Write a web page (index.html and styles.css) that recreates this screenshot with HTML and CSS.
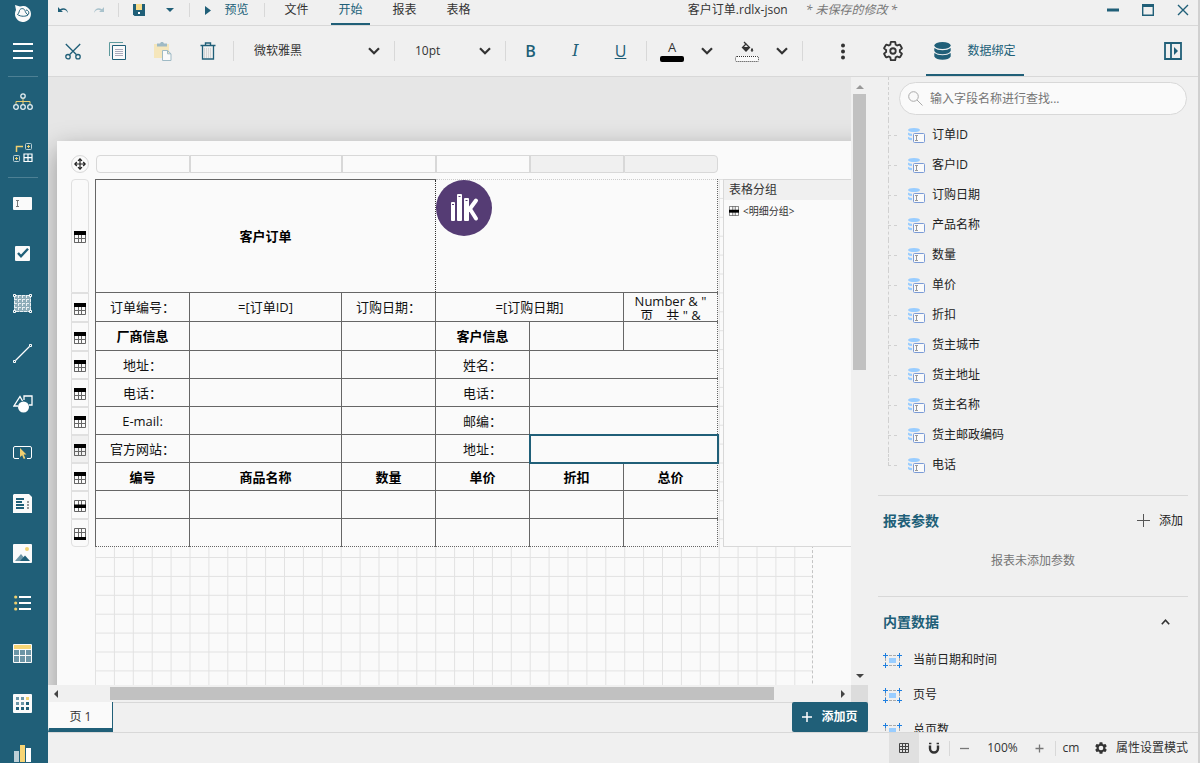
FILE: index.html
```html
<!DOCTYPE html>
<html lang="zh-CN">
<head>
<meta charset="utf-8">
<title>客户订单.rdlx-json</title>
<link rel="stylesheet" href="styles.css">
</head>
<body>
<svg class="sprite" aria-hidden="true">
  <symbol id="chevron" viewBox="0 0 12 8"><path d="M1 1.2l5 5 5-5" fill="none" stroke="currentColor" stroke-width="2.2"/></symbol>
  <symbol id="row-head" viewBox="0 0 12 12"><path d="M.5.5h11v11H.5zM.5 4v7.500M4.500 3v8.500M7.500 3v8.500M.5 7.500h11" fill="none" stroke="#666"/><path d="M0 0h12v4H0z"/></symbol>
  <symbol id="row-detail" viewBox="0 0 12 12"><path d="M.5.5h11v11H.5zM4.500 0v12M7.500 0v12" fill="none" stroke="#666"/><path d="M0 4.500h12v3.500H0z"/></symbol>
  <symbol id="row-foot" viewBox="0 0 12 12"><path d="M.5.5h11v11H.5zM4.500 0v9M7.500 0v9M.5 4.500h11" fill="none" stroke="#666"/><path d="M0 9h12v3H0z"/></symbol>
  <symbol id="field" viewBox="0 0 17 15"><ellipse cx="6" cy="2" rx="6" ry="2" fill="#99cdff"/><path d="M0 4.500q2 1.200 4 1.200V8q-3 0-4-1.300zM0 8.700q2 1.200 4 1.200v2.400q-3 0-4-1.400z" fill="#99cdff"/><rect x="5.500" y="5.500" width="11" height="9" rx="1" fill="#fafafa" stroke="#7a9bd6"/><path d="M7 7.500h3M7 12.500h3M8.500 7.500v5" stroke="#999" fill="none"/></symbol>
  <symbol id="builtin" viewBox="0 0 19 15"><path d="M6 2.500h7M6 12.500h7M2.500 5v5M16.500 5v5" stroke="#aaa" stroke-dasharray="3 1" fill="none"/><path d="M6 5h7v5H6z" fill="#99cdff"/><path d="M0 2.500h5M2.500 0v5M14 2.500h5M16.500 0v5M0 12.500h5M2.500 10v5M14 12.500h5M16.500 10v5" stroke="#1e7fe0" fill="none"/></symbol>
  <symbol id="gear" viewBox="0 0 24 24"><path d="M19.430 12.980c.04-.32.07-.64.07-.98s-.03-.66-.07-.98l2.110-1.650a.5.5 0 0 0 .12-.64l-2-3.460a.5.5 0 0 0-.61-.22l-2.490 1a7.300 7.300 0 0 0-1.690-.98l-.38-2.650A.49.49 0 0 0 14 2h-4a.49.49 0 0 0-.49.420l-.38 2.650c-.61.250-1.170.590-1.690.980l-2.490-1a.5.5 0 0 0-.61.220l-2 3.460a.5.5 0 0 0 .12.640l2.110 1.650c-.04.320-.07.650-.07.980s.03.660.07.980l-2.110 1.650a.5.5 0 0 0-.12.640l2 3.460c.12.220.39.300.61.220l2.490-1c.52.400 1.080.730 1.690.980l.38 2.650c.03.240.24.420.49.420h4c.25 0 .46-.18.49-.42l.38-2.650c.61-.25 1.170-.59 1.690-.98l2.490 1c.23.090.49 0 .61-.22l2-3.460a.5.5 0 0 0-.12-.64z"/></symbol>
</svg>

<div class="app">
  <nav class="sidebar" aria-label="工具箱">
    <div class="brand">
      <svg width="18" height="18" viewBox="0 0 18 18"><path d="M1 1l5 1.500A8 8 0 1 1 2 6z" fill="#fafafa"/><path d="M3.500 10.500c1-1 1.500-2 2-4 .8-2.500 4.500-2.500 5.500 0 .4 1.500 1 3 3 4.500-2 1.500-7 2-10.500-.5zM12 6c2 0 3.500 2 2.500 4.500" fill="none" stroke="#205f78"/></svg>
    </div>
    <button class="tool" aria-label="菜单"><svg width="20" height="16" viewBox="0 0 20 16"><path d="M0 1h20M0 8h20M0 15h20" stroke="#fff" stroke-width="2"/></svg></button>
    <hr class="tool-rule">
    <button class="tool" aria-label="结构"><svg width="20" height="18" viewBox="0 0 20 18" fill="none"><path d="M10 5v6M3 11.500V8.500h14v3" stroke="#e8cd72"/><g stroke="#e4eef1" stroke-width="1.300"><circle cx="10" cy="3" r="2.200"/><circle cx="3" cy="14" r="2.300"/><circle cx="10" cy="14" r="2.300"/><circle cx="17" cy="14" r="2.300"/></g></svg></button>
    <button class="tool" aria-label="分组"><svg width="20" height="20" viewBox="0 0 20 20" fill="none"><path d="M3.500 10V4.500H10" stroke="#f0d070" stroke-width="1.500"/><g stroke="#b9d0d8"><rect x="12.500" y="1.500" width="6" height="6" rx="1"/><rect x=".5" y="13.500" width="6" height="6" rx="1"/></g><path d="M14 4.500h3M15.500 3v3M2 16.500h3M3.500 15v3" stroke="#f0d070"/><path d="M11 12h8v7.500h-8zM15 12v7.500M11 15.700h8" stroke="#fff" stroke-width="1.200"/></svg></button>
    <hr class="tool-rule">
    <button class="tool" aria-label="文本框"><svg width="19" height="13" viewBox="0 0 19 13"><rect width="19" height="13" rx="1" fill="#fafafa"/><path d="M3 3.500h3M3 9.500h3M4.500 3.500v6" stroke="#777"/></svg></button>
    <button class="tool" aria-label="复选框"><svg width="15" height="15" viewBox="0 0 15 15"><rect width="15" height="15" rx="1" fill="#fafafa"/><path d="M3 7l3 3.200 7-7.500" fill="none" stroke="#205f78" stroke-width="2.400"/></svg></button>
    <button class="tool" aria-label="容器"><svg width="19" height="19" viewBox="0 0 19 19" fill="none"><path d="M1.500 1.500h16v16h-16z" fill="#8fadb9"/><path d="M1.500 1.500h16v16h-16zM5.500 1v17M9.500 1v17M13.500 1v17M1 5.500h17M1 9.500h17M1 13.500h17" stroke="#e9f0f3" stroke-dasharray="3 1"/><g fill="#205f78" stroke="#fff"><path d="M.5.5h2v2h-2zM16.500.5h2v2h-2zM.5 16.500h2v2h-2zM16.500 16.500h2v2h-2z"/></g></svg></button>
    <button class="tool" aria-label="线"><svg width="19" height="19" viewBox="0 0 19 19" fill="none" stroke="#fff"><path d="M2.500 16.500l14-14" stroke-width="1.300"/><path d="M.5 16.500h2v2h-2zM16.500.5h2v2h-2z" fill="#205f78"/></svg></button>
    <button class="tool" aria-label="形状"><svg width="20" height="20" viewBox="0 0 20 20" fill="none" stroke="#fff" stroke-width="1.300"><path d="M5 13H1L7 3.500 9.500 8M11 7V3h8v9h-3"/><circle cx="10.500" cy="14" r="5.500" fill="#fff" stroke="none"/></svg></button>
    <button class="tool" aria-label="目标"><svg width="19" height="14" viewBox="0 0 19 14" fill="none"><path d="M6 12.500H2a1.500 1.500 0 0 1-1.500-1.500V2A1.500 1.500 0 0 1 2 .5h15A1.500 1.500 0 0 1 18.500 2v9a1.500 1.500 0 0 1-1.500 1.500h-3" stroke="#fff"/><path d="M7 2l6.500 6.500h-2.800l1.600 3.700-1.500.7-1.600-3.700L7 11z" fill="#f0d070"/></svg></button>
    <button class="tool" aria-label="目录"><svg width="19" height="19" viewBox="0 0 19 19"><path d="M1 0h15l3 3v16H0V1z" fill="#fafafa"/><path d="M3 5h8M3 8h6M3 11h8M3 14h8" stroke="#205f78" stroke-width="2"/><path d="M14 8h2M14 11h2M14 14h2" stroke="#999" stroke-width="2"/></svg></button>
    <button class="tool" aria-label="图像"><svg width="19" height="19" viewBox="0 0 19 19"><rect width="19" height="19" rx="1" fill="#fafafa"/><circle cx="14" cy="5" r="2" fill="#f0d070"/><path d="M2 17l6-7 6 7z" fill="#6c95a6"/><path d="M7 17l5-5.500 5 5.500z" fill="#205f78"/></svg></button>
    <button class="tool" aria-label="列表"><svg width="18" height="16" viewBox="0 0 18 16"><path d="M5 2h12M5 8h12M5 14h12" stroke="#fff" stroke-width="2"/><g fill="#f0d070"><circle cx="1.700" cy="2" r="1.600"/><circle cx="1.700" cy="8" r="1.600"/><circle cx="1.700" cy="14" r="1.600"/></g></svg></button>
    <button class="tool" aria-label="表格"><svg width="19" height="19" viewBox="0 0 19 19"><rect width="19" height="19" rx="1" fill="#fafafa"/><path d="M1 1h17v4H1z" fill="#f7d575"/><path d="M1 6h5v5H1zM7 6h5v5H7zM13 6h5v5h-5zM1 12h5v6H1zM7 12h5v6H7zM13 12h5v6h-5z" fill="#6c95a6"/></svg></button>
    <button class="tool" aria-label="矩表"><svg width="19" height="19" viewBox="0 0 19 19"><rect width="19" height="19" rx="1" fill="#fafafa"/><path d="M3 3h3v3H3zM8 3h3v3H8zM3 8h3v3H3zM8 8h3v3H8z" fill="#6c95a6"/><path d="M13 3h3v3h-3z" fill="#f0d070"/><path d="M13 8h3v3h-3zM3 13h3v3H3zM8 13h3v3H8zM13 13h3v3h-3z" fill="#205f78"/></svg></button>
    <button class="tool" aria-label="图表"><svg width="17" height="17" viewBox="0 0 17 17"><path d="M0 6h5v11H0z" fill="#bccfd7"/><path d="M6 0h5v17H6z" fill="#f7d575"/><path d="M12 3h5v14h-5z" fill="#fff"/></svg></button>
  </nav>

  <div class="main">
    <header class="menubar">
      <button class="mini" aria-label="撤销"><svg width="12" height="8" viewBox="0 0 12 8"><path d="M1 1v5h5L4.200 4.400C7 2.800 9.500 4 11 7 10.500 3 7 1 3 3.200z" fill="#205f78"/></svg></button>
      <button class="mini" aria-label="重做" disabled><svg width="12" height="8" viewBox="0 0 12 8"><path d="M11 1v5H6l1.800-1.600C5 2.800 2.500 4 1 7 1.500 3 5 1 9 3.200z" fill="#a9c2cc"/></svg></button>
      <span class="vr"></span>
      <button class="mini save" aria-label="保存"><svg width="12" height="12" viewBox="0 0 12 12"><path d="M0 0h12v12H1.500L0 10.500z" fill="#205f78"/><path d="M3 0h6v6H3z" fill="#f7dc8a"/><path d="M5 8h2v2H5z" fill="#fff"/></svg></button>
      <button class="mini caret" aria-label="更多保存选项"><svg width="8" height="4" viewBox="0 0 8 4"><path d="M0 0h8L4 4z" fill="#205f78"/></svg></button>
      <span class="vr"></span>
      <button class="preview"><svg width="6" height="9" viewBox="0 0 6 9"><path d="M0 0l6 4.500L0 9z" fill="#205f78"/></svg>预览</button>
      <span class="vr"></span>
      <div class="tabs">
        <button class="tab">文件</button>
        <button class="tab tab-on">开始</button>
        <button class="tab">报表</button>
        <button class="tab">表格</button>
      </div>
      <div class="doc"><span>客户订单.rdlx-json</span><em>* 未保存的修改 *</em></div>
      <div class="window">
        <button aria-label="最小化"><svg width="12" height="12" viewBox="0 0 12 12"><path d="M0 6h12" stroke="#205f78" stroke-width="3"/></svg></button>
        <button aria-label="最大化"><svg width="12" height="12" viewBox="0 0 12 12"><path d="M.7.7h10.600v10.600H.7z" fill="none" stroke="#205f78" stroke-width="1.400"/><path d="M0 0h12v3H0z" fill="#205f78"/></svg></button>
        <button aria-label="关闭"><svg width="12" height="12" viewBox="0 0 12 12"><path d="M1 1l10 10M11 1L1 11" stroke="#205f78" stroke-width="1.400"/></svg></button>
      </div>
    </header>

    <div class="toolbar">
      <button class="act" aria-label="剪切"><svg width="16" height="17" viewBox="0 0 16 17" fill="none" stroke="#205f78" stroke-width="1.300"><path d="M.8 1l10.500 10.500M15.200 1L4.700 11.500"/><circle cx="3" cy="13.700" r="2.200"/><circle cx="13" cy="13.700" r="2.200"/></svg></button>
      <button class="act" aria-label="复制"><svg width="18" height="18" viewBox="0 0 18 18" fill="none"><path d="M.5 14V.5H14" stroke="#5d9a9d"/><path d="M3.500 3.500h13v14h-13z" fill="#fafafa" stroke="#205f78"/><path d="M6 7.500h8M6 9.500h8M6 11.500h8M6 13.500h8" stroke="#aab"/></svg></button>
      <button class="act" aria-label="粘贴" disabled><svg width="18" height="19" viewBox="0 0 18 19"><path d="M0 2h15v14H0z" fill="#f5e6bb"/><path d="M3 1.500h3L7 0h2l1 1.500h3v3H3z" fill="#9fbac5"/><path d="M8.500 8.500h5l3.500 3.300v6.700H8.500zM13.500 8.500v3.300H17" fill="#fafafa" stroke="#9fbac5"/></svg></button>
      <button class="act" aria-label="删除"><svg width="16" height="18" viewBox="0 0 16 18" fill="none" stroke="#205f78"><path d="M.5 3.500h15M5.500 3V1h5v2" stroke-width="1.400"/><path d="M2.500 4v13h11V4" stroke-width="1.300"/><path d="M4 7h8M4 9h8M4 11h8M4 13h8M4 15h8" stroke="#bbb" stroke-dasharray="1 1"/></svg></button>
      <span class="vr"></span>
      <label class="pick pick-font"><select aria-label="字体"><option>微软雅黑</option></select><svg width="12" height="8"><use href="#chevron"/></svg></label>
      <span class="vr"></span>
      <label class="pick pick-size"><select aria-label="字号"><option>10pt</option></select><svg width="12" height="8"><use href="#chevron"/></svg></label>
      <span class="vr"></span>
      <button class="act glyph">B</button>
      <button class="act glyph glyph-i">I</button>
      <button class="act glyph glyph-u">U</button>
      <span class="vr"></span>
      <button class="swatch" aria-label="字体颜色"><span>A</span><i class="ink"></i></button>
      <button class="drop" aria-label="选择字体颜色"><svg width="12" height="8"><use href="#chevron"/></svg></button>
      <button class="swatch swatch-fill" aria-label="填充颜色"><svg width="13" height="13" viewBox="0 0 13 13"><path d="M3 1l5.500 5.500L5 10 1.500 6.500 5.500 2.500" fill="none" stroke="#333" stroke-width="1.300"/><path d="M1.500 6h7L5 10z" fill="#333"/><path d="M11 7.500q1.500 2.300 0 3-1.500-.7 0-3z" fill="#333" stroke="#333"/></svg><i class="ink ink-none"></i></button>
      <button class="drop" aria-label="选择填充颜色"><svg width="12" height="8"><use href="#chevron"/></svg></button>
      <span class="vr"></span>
      <div class="side-tabs">
        <button class="act" aria-label="更多"><svg width="4" height="17" viewBox="0 0 4 17" fill="#333"><circle cx="2" cy="2.500" r="2"/><circle cx="2" cy="8.500" r="2"/><circle cx="2" cy="14.500" r="2"/></svg></button>
        <button class="act" aria-label="属性"><svg width="22" height="22" viewBox="0 0 24 24" fill="none" stroke="#333" stroke-width="2"><use href="#gear"/><circle cx="12" cy="12" r="3"/></svg></button>
        <button class="side-tab"><svg width="17" height="18" viewBox="0 0 17 18" fill="#205f78"><ellipse cx="8.500" cy="3.500" rx="8.200" ry="3.500"/><path d="M.3 6q3 2.300 8.200 2.300T16.700 6v3q-2 3.200-8.200 3.200T.3 9zM.3 11q3 2.300 8.200 2.300t8.200-2.300v3.500q-2 3.300-8.200 3.300T.3 14.500z"/></svg>数据绑定</button>
        <button class="act collapse" aria-label="折叠面板"><svg width="18" height="18" viewBox="0 0 18 18"><path d="M1 1h16v16H1zM7 1v16" fill="none" stroke="#205f78" stroke-width="1.800"/><path d="M10 5l4 4-4 4z" fill="#205f78"/></svg></button>
      </div>
    </div>

    <div class="work">
      <div class="design">
        <div class="canvas">
          <div class="page">
            <svg class="page-grid" aria-hidden="true">
              <defs><pattern id="grid" width="18.900" height="18.900" patternUnits="userSpaceOnUse"><path d="M.5 0v19M0 .5h19" fill="none" stroke="#e2e2e2" stroke-width="1"/></pattern></defs>
              <rect width="100%" height="100%" fill="url(#grid)"/>
            </svg>
            <div class="move"><svg width="12" height="12" viewBox="0 0 12 12"><path d="M6 1v10M1 6h10M4 2.800l2-2 2 2M4 9.200l2 2 2-2M2.800 4l-2 2 2 2M9.200 4l2 2-2 2" fill="none" stroke="#222" stroke-width="1.200"/></svg></div>
            <div class="cols"><i></i><i></i><i></i><i></i><i class="on"></i><i class="on"></i></div>
            <div class="rows">
              <i class="tall"><svg width="12" height="12"><use href="#row-head"/></svg></i>
              <i class="mid"><svg width="12" height="12"><use href="#row-head"/></svg></i>
              <i class="mid"><svg width="12" height="12"><use href="#row-head"/></svg></i>
              <i><svg width="12" height="12"><use href="#row-head"/></svg></i>
              <i><svg width="12" height="12"><use href="#row-head"/></svg></i>
              <i><svg width="12" height="12"><use href="#row-head"/></svg></i>
              <i class="on"><svg width="12" height="12"><use href="#row-head"/></svg></i>
              <i><svg width="12" height="12"><use href="#row-head"/></svg></i>
              <i><svg width="12" height="12"><use href="#row-detail"/></svg></i>
              <i><svg width="12" height="12"><use href="#row-foot"/></svg></i>
            </div>
            <table class="report">
              <colgroup><col class="c"><col class="c-wide"><col class="c"><col class="c"><col class="c"><col class="c"></colgroup>
              <tbody>
                <tr class="tall"><th colspan="3">客户订单</th><td colspan="3" class="pic"><svg width="56" height="56" viewBox="0 0 56 56"><circle cx="28" cy="28" r="28" fill="#553c74"/><g fill="#fff"><rect x="15" y="22" width="4" height="19" rx="1"/><rect x="21" y="14" width="5" height="27" rx="1"/><rect x="28" y="18" width="5" height="23" rx="1"/></g><path d="M33 30l7-9.500M34 29l6 9.500" stroke="#fff" stroke-width="4" stroke-linecap="round" fill="none"/><path d="M16 24.500h2M22.500 16.500h2M29.500 20.500h2" stroke="#553c74"/></svg></td></tr>
                <tr class="mid"><td>订单编号：</td><td>=[订单ID]</td><td>订购日期：</td><td colspan="2">=[订购日期]</td><td><div class="clip">Number &amp; "<br>页　共 " &amp;</div></td></tr>
                <tr class="mid"><th>厂商信息</th><td></td><td></td><th>客户信息</th><td></td><td></td></tr>
                <tr><td>地址：</td><td></td><td></td><td>姓名：</td><td colspan="2"></td></tr>
                <tr><td>电话：</td><td></td><td></td><td>电话：</td><td colspan="2"></td></tr>
                <tr><td>E-mail:</td><td></td><td></td><td>邮编：</td><td colspan="2"></td></tr>
                <tr><td>官方网站：</td><td></td><td></td><td>地址：</td><td colspan="2" class="picked"></td></tr>
                <tr><th>编号</th><th>商品名称</th><th>数量</th><th>单价</th><th>折扣</th><th>总价</th></tr>
                <tr><td></td><td></td><td></td><td></td><td></td><td></td></tr>
                <tr class="last"><td></td><td></td><td></td><td></td><td></td><td></td></tr>
              </tbody>
            </table>
            <aside class="groups">
              <h2>表格分组</h2>
              <p><svg width="10" height="10" viewBox="0 0 12 12"><use href="#row-detail"/></svg>&lt;明细分组&gt;</p>
            </aside>
          </div>
        </div>
        <div class="bar-v"><svg width="8" height="4" viewBox="0 0 8 4"><path d="M0 4h8L4 0z" fill="#999"/></svg><span class="track-v"><i></i></span><svg width="8" height="4" viewBox="0 0 8 4"><path d="M0 0h8L4 4z" fill="#444"/></svg></div>
        <div class="bar-h"><svg width="4" height="8" viewBox="0 0 4 8"><path d="M4 0v8L0 4z" fill="#444"/></svg><span class="track-h"><i></i></span><svg width="4" height="8" viewBox="0 0 4 8"><path d="M0 0v8l4-4z" fill="#444"/></svg></div>
        <div class="corner"></div>
        <div class="sheets"><button class="sheet">页 1</button><button class="add-page"><svg width="10" height="10" viewBox="0 0 10 10"><path d="M5 0v10M0 5h10" stroke="#fff" stroke-width="1.500"/></svg>添加页</button></div>
      </div>

      <aside class="panel">
        <div class="search"><label><svg width="15" height="15" viewBox="0 0 15 15" fill="none" stroke="#aaa"><circle cx="5.500" cy="5.500" r="4.800"/><path d="M9 9l5.500 5.500"/></svg><input type="text" aria-label="查找字段" placeholder="输入字段名称进行查找..."></label></div>
        <ul class="fields">
          <li><svg width="17" height="15"><use href="#field"/></svg>订单ID</li>
          <li><svg width="17" height="15"><use href="#field"/></svg>客户ID</li>
          <li><svg width="17" height="15"><use href="#field"/></svg>订购日期</li>
          <li><svg width="17" height="15"><use href="#field"/></svg>产品名称</li>
          <li><svg width="17" height="15"><use href="#field"/></svg>数量</li>
          <li><svg width="17" height="15"><use href="#field"/></svg>单价</li>
          <li><svg width="17" height="15"><use href="#field"/></svg>折扣</li>
          <li><svg width="17" height="15"><use href="#field"/></svg>货主城市</li>
          <li><svg width="17" height="15"><use href="#field"/></svg>货主地址</li>
          <li><svg width="17" height="15"><use href="#field"/></svg>货主名称</li>
          <li><svg width="17" height="15"><use href="#field"/></svg>货主邮政编码</li>
          <li><svg width="17" height="15"><use href="#field"/></svg>电话</li>
        </ul>
        <section class="block">
          <div class="block-head"><h2>报表参数</h2><button><svg width="14" height="14" viewBox="0 0 14 14"><path d="M6.500 0v13M0 6.500h13" stroke="#555"/></svg>添加</button></div>
          <p class="empty">报表未添加参数</p>
        </section>
        <section class="block">
          <div class="block-head block-head-fold"><h2>内置数据</h2><button aria-label="折叠"><svg width="9" height="6" viewBox="0 0 9 6"><path d="M.8 5.200l3.700-4 3.700 4" fill="none" stroke="#333" stroke-width="1.600"/></svg></button></div>
          <ul class="builtins">
            <li><svg width="19" height="15"><use href="#builtin"/></svg>当前日期和时间</li>
            <li><svg width="19" height="15"><use href="#builtin"/></svg>页号</li>
            <li><svg width="19" height="15"><use href="#builtin"/></svg>总页数</li>
          </ul>
        </section>
      </aside>
    </div>

    <footer class="status">
      <button class="st on" aria-label="网格"><svg width="12" height="12" viewBox="0 0 12 12"><path d="M1.500 1.500h9v9h-9zM4.500 1v10M7.500 1v10M1 4.500h10M1 7.500h10" fill="none" stroke="#444"/></svg></button>
      <button class="st" aria-label="吸附"><svg width="12" height="12" viewBox="0 0 12 12" fill="none"><path d="M2 3.500v3a4 4 0 0 0 8 0v-3" stroke="#333" stroke-width="2.400"/><path d="M1 1.500h2.400M8.600 1.500H11" stroke="#333" stroke-width="1.600"/></svg></button>
      <span class="vr"></span>
      <button class="st" aria-label="缩小"><svg width="9" height="9" viewBox="0 0 9 9"><path d="M0 4.500h9" stroke="#777" stroke-width="1.300"/></svg></button>
      <output class="zoom">100%</output>
      <button class="st" aria-label="放大"><svg width="9" height="9" viewBox="0 0 9 9"><path d="M.5 4.500h8M4.500.5v8" stroke="#777" stroke-width="1.300"/></svg></button>
      <span class="vr"></span>
      <button class="unit">cm</button>
      <button class="mode"><svg width="14" height="14" viewBox="0 0 24 24" fill="#333"><use href="#gear"/><circle cx="12" cy="12" r="4" fill="#f0f0f0"/></svg>属性设置模式</button>
    </footer>
  </div>
</div>
</body>
</html>
```

FILE: styles.css
```css
* { box-sizing: border-box; }

:root {
  --teal: #205f78;
  --face: #f0f0f0;
  --sheet: #fafafa;
  --line: #d8d8d8;
  --cell: #666;
}

body {
  margin: 0;
  font: 12px/16px "Open Sans", "Noto Sans CJK SC", sans-serif;
  color: #333;
  background: var(--face);
}

button, select, input { font: inherit; color: inherit; }
button { padding: 0; border: 0; background: none; display: flex; align-items: center; justify-content: center; }
svg { display: block; flex: none; }
ul { list-style: none; margin: 0; padding: 0; }
h2, p { margin: 0; }
.sprite { position: absolute; width: 0; height: 0; }

.app { display: flex; height: 100vh; overflow: hidden; border-right: 2px solid #d0d0d0; }
.main { flex: 1; min-width: 0; display: flex; flex-direction: column; }
.vr { width: 1px; height: 20px; background: var(--line); flex: none; }

/* Toolbox */
.sidebar { width: 48px; flex: none; background: var(--teal); overflow: hidden; }
.brand { width: 45px; height: 26px; display: flex; align-items: center; justify-content: center; }
.tool { width: 45px; height: 50px; }
.tool-rule { width: 30px; height: 1px; margin: 0 0 0 8px; border: 0; background: #4d8094; }

/* Menu bar */
.menubar { height: 26px; flex: none; display: flex; align-items: center; padding: 0 9px 5px 0; border-bottom: 1px solid var(--line); }
.menubar .vr { height: 14px; }
.menubar button { height: 20px; }
.mini { width: 35px; }
.menubar .mini:first-child { margin-left: -3px; }
.mini:disabled { width: 38px; }
.save { width: 40px; }
.caret { width: 30px; justify-content: flex-start; padding-left: 7px; }
.preview { width: 74px; gap: 13px; color: var(--teal); }
.tabs { display: flex; gap: 15px; margin-left: 12px; }
.menubar .tab { width: 39px; height: 25px; margin-bottom: -5px; padding-bottom: 3px; border-bottom: 2px solid transparent; }
.menubar .tab-on { color: var(--teal); border-color: var(--teal); }
.doc { flex: 1; display: flex; justify-content: center; gap: 18px; }
.doc em { color: #777; }
.window { display: flex; gap: 23px; }

/* Tool bar */
.toolbar { height: 51px; flex: none; display: flex; align-items: center; padding-left: 2px; border-bottom: 1px solid var(--line); }
.act { width: 45px; height: 49px; }
.pick { position: relative; display: flex; align-items: center; height: 30px; color: #333; }
.pick select { appearance: none; border: 0; background: none; width: 100%; height: 30px; padding: 0 0 0 20px; }
.pick svg { position: absolute; right: 14px; pointer-events: none; }
.pick-font { width: 160px; }
.pick-size { width: 110px; }
.toolbar .act + .vr { margin-left: 3px; }
.glyph { font-size: 16px; color: var(--teal); font-weight: 600; }
.toolbar .vr + .glyph { margin-left: 2px; }
.glyph-i { font-family: "DejaVu Serif", serif; font-style: italic; font-weight: 400; }
.glyph-u { font-weight: 400; text-decoration: underline; }
.swatch { width: 50px; height: 30px; flex-direction: column; gap: 2px; color: #333; }
.swatch span { font-size: 13px; line-height: 14px; }
.ink { width: 24px; height: 6px; border-radius: 2px; background: #000; }
.ink-none { background: var(--sheet); border: 1px dotted #333; }
.drop { width: 20px; height: 30px; color: #333; }
.swatch-fill { margin-left: 5px; }
.drop + .vr { margin-left: 10px; }
.side-tabs { flex: 1; display: flex; align-items: center; padding-left: 17px; padding-right: 3px; gap: 5px; }
.side-tab { width: 98px; height: 49px; gap: 16px; margin-left: 6px; border-bottom: 2px solid var(--teal); border-top: 2px solid transparent; color: var(--teal); }
.collapse { margin-left: auto; }

/* Design surface */
.work { flex: 1; min-height: 0; display: flex; }
.design { flex: 1; min-width: 0; display: grid; grid-template: minmax(0, 1fr) 17px 30px / minmax(0, 1fr) 17px; }
.canvas { overflow: hidden; background: #e6e6e6; padding: 64px 0 0 9px; }
.page {
  position: relative;
  width: calc(100% + 60px);
  height: 100%;
  min-height: 700px;
  padding: 14px 0 0 14px;
  background: var(--sheet);
  box-shadow: 0 8px 24px rgba(0, 0, 0, .35);
  display: grid;
  grid-template: 18px auto 1fr / 18px 623px 1fr;
  gap: 6px;
}
.page-grid { position: absolute; left: 38px; top: 38px; width: 718px; height: 100%; border-right: 1px dashed #c4c4c4; }
.move { width: 18px; height: 18px; border: 1px solid var(--line); border-radius: 50%; display: flex; align-items: center; justify-content: center; background: var(--sheet); }
.cols { grid-column: 2; display: grid; grid-template-columns: 95px 152px 94px 94px 94px 94px; }
.cols i { border: 1px solid var(--line); background: var(--sheet); }
.cols i:first-child { margin-left: 1px; border-radius: 4px 0 0 4px; }
.cols i:last-child { border-radius: 0 4px 4px 0; }
.cols .on, .rows .on { background: var(--face); }
.rows { position: relative; display: flex; flex-direction: column; grid-row: 2; }
.rows i { height: 28px; border: 1px solid #e0e0e0; background: var(--sheet); display: flex; align-items: center; justify-content: center; padding-top: 2px; }
.rows .mid { height: 29px; }
.rows .tall { height: 114px; border-radius: 4px 4px 0 0; }
.rows i:last-child { border-radius: 0 0 4px 4px; }

.report { position: relative; grid-row: 2; grid-column: 2; width: 623px; table-layout: fixed; border-collapse: collapse; background: var(--sheet); color: #111; font-size: 13px; line-height: 18px; border-left: 1px solid var(--cell); border-right: 1px dotted var(--cell); border-bottom: 1px dotted var(--cell); }
.c { width: 94px; }
.c-wide { width: 152px; }
.report tr { height: 28px; }
.report .mid { height: 29px; }
.report .tall { height: 113px; }
.report th, .report td { padding: 0; border: 1px solid var(--cell); text-align: center; vertical-align: middle; }
.report th { color: #000; }
.report tr > :last-child { border-right: 1px dotted var(--cell); }
.report .last > * { border-bottom: 1px dotted var(--cell); }
.report .tall th { border-right: 1px dotted #333; }
.report .pic { vertical-align: top; border-top: 1px dotted #ccc; border-left: 1px dotted #333; }
.clip { height: 26px; line-height: 14px; overflow: hidden; }
.report .picked { outline: 2px solid var(--teal); outline-offset: -1px; }

.groups { position: relative; grid-row: 2; grid-column: 3; margin-left: -1px; border: 1px solid var(--line); background: var(--sheet); }
.groups h2 { height: 20px; padding-left: 5px; font-size: 12px; line-height: 20px; font-weight: 400; background: var(--face); }
.groups p { display: flex; align-items: center; gap: 4px; height: 21px; padding-left: 5px; font-size: 10px; }

.bar-v { display: flex; flex-direction: column; align-items: center; padding: 8px 0 7px; background: var(--face); }
.track-v { flex: 1; width: 13px; margin: 5px 0; }
.track-v i { display: block; height: 48%; background: #c1c1c1; }
.bar-h { display: flex; align-items: center; padding: 0 6px; background: var(--face); }
.track-h { flex: 1; height: 13px; padding: 0 67px 0 52px; }
.track-h i { display: block; height: 13px; background: #c1c1c1; }
.corner { background: #dcdcdc; }
.sheets { grid-column: 1 / 3; display: flex; justify-content: space-between; border-top: 1px solid var(--line); }
.sheets button { height: 30px; margin-top: -1px; }
.sheets .sheet { width: 65px; padding-top: 4px; background: var(--sheet); border-bottom: 4px solid var(--teal); border-right: 1px solid var(--teal); border-left: 1px solid var(--face); }
.add-page { width: 76px; gap: 9px; border-radius: 2px; background: var(--teal); color: #fff; font-weight: 700; }

/* Data panel */
.panel { width: 330px; flex: none; padding: 0 10px; overflow: hidden; color: #222; }
.search, .fields li { position: relative; margin-left: 10px; }
.search::before, .fields li::before { content: ""; position: absolute; left: 0; top: 0; bottom: 0; border-left: 1px dashed #d0d0d0; }
.fields li::after { content: ""; position: absolute; left: 0; top: 15px; width: 9px; border-top: 1px dashed #d0d0d0; }
.fields li:last-child::before { bottom: 15px; }
.search { padding: 5px 1px 5px 11px; }
.search label { display: flex; align-items: center; gap: 7px; height: 33px; padding: 0 8px; border: 1px solid var(--line); border-radius: 17px; background: var(--sheet); }
.search input { flex: 1; min-width: 0; padding: 0; border: 0; outline: 0; background: none; }
.search input::placeholder { color: #757575; opacity: 1; }
.fields li { display: flex; align-items: center; gap: 7px; height: 30px; padding-left: 20px; }
.fields { margin-bottom: 15px; }
.block { border-top: 1px solid var(--line); padding-bottom: 20px; }
.block-head { display: flex; align-items: center; justify-content: space-between; height: 50px; padding: 0 5px; }
.block-head h2 { color: var(--teal); font-size: 14px; line-height: 20px; }
.block-head button { gap: 8px; height: 24px; }
.block-head-fold { padding-right: 18px; }
.empty { height: 30px; line-height: 30px; text-align: center; color: #757575; }
.builtins { margin-top: -5px; }
.builtins li { display: flex; align-items: center; gap: 11px; height: 35px; padding-left: 5px; }
.builtins svg { margin-top: 2px; }

/* Status bar */
.status { height: 31px; flex: none; display: flex; align-items: center; justify-content: flex-end; padding-right: 10px; border-top: 1px solid var(--line); background: var(--face); }
.status .vr { height: 15px; }
.st { width: 30px; height: 30px; }
.st.on { background: #e0e0e0; }
.zoom { width: 45px; text-align: center; }
.unit { width: 30px; }
.mode { gap: 8px; padding-left: 8px; }
```
